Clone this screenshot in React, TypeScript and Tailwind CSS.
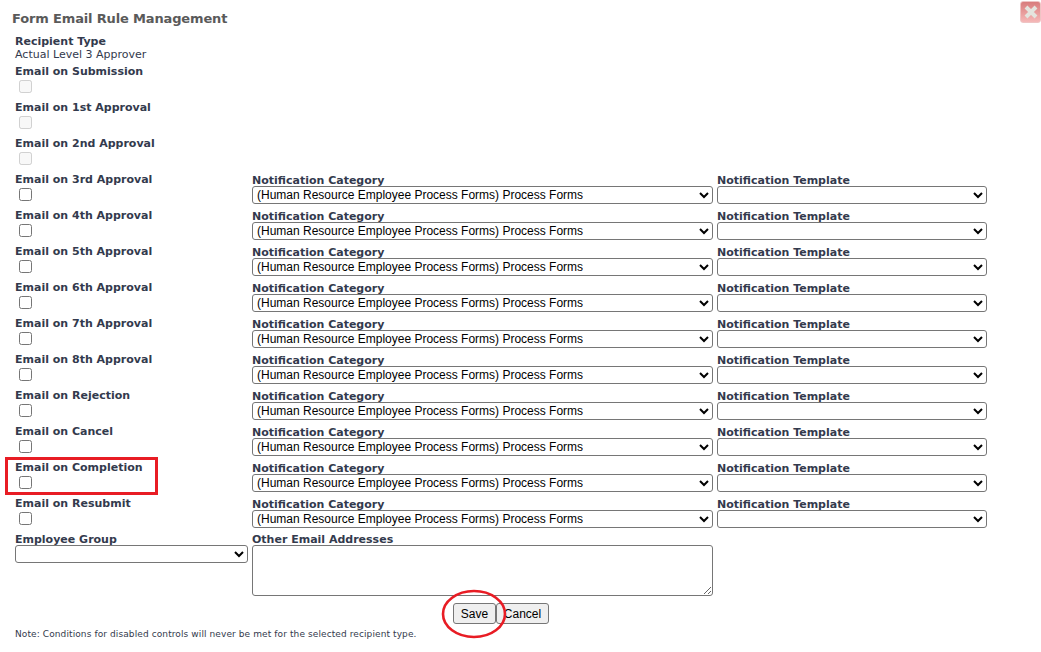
const categoryLabel = "(Human Resource Employee Process Forms) Process Forms";

const disabledRows = ["Email on Submission", "Email on 1st Approval", "Email on 2nd Approval"];
const activeRows = [
  "Email on 3rd Approval",
  "Email on 4th Approval",
  "Email on 5th Approval",
  "Email on 6th Approval",
  "Email on 7th Approval",
  "Email on 8th Approval",
  "Email on Rejection",
  "Email on Cancel",
  "Email on Completion",
  "Email on Resubmit",
];

const labelClass = "block h-[14px] text-[11px] leading-[14px] font-bold text-[#333a4d] whitespace-nowrap";
const selectClass =
  "block h-[18px] border border-[#767676] rounded-[3px] bg-white text-[12px] leading-[14px] text-black [font-family:'Liberation_Sans',Arial,sans-serif]";
const buttonClass =
  "h-[21px] rounded-[3px] border border-[#767676] bg-[#efefef] text-[12px] text-black [font-family:'Liberation_Sans',Arial,sans-serif]";

function CheckRow({ label, disabled }: { label: string; disabled?: boolean }) {
  return (
    <div className="h-[36px] w-[237px] shrink-0 pt-[1px]">
      <span className={labelClass}>{label}</span>
      <input type="checkbox" disabled={disabled} className="block ml-[4px] mt-[1px] w-[13px] h-[13px]" />
    </div>
  );
}

function NotificationRow({ label }: { label: string }) {
  return (
    <div className="flex h-[36px]">
      <CheckRow label={label} />
      <div className="w-[465px] shrink-0 pt-[2px]">
        <span className={labelClass}>Notification Category</span>
        <select className={`${selectClass} w-[461px] mt-[-2px]`} defaultValue={categoryLabel}>
          <option>{categoryLabel}</option>
        </select>
      </div>
      <div className="w-[270px] shrink-0 pt-[2px]">
        <span className={labelClass}>Notification Template</span>
        <select className={`${selectClass} w-[270px] mt-[-2px]`}>
          <option></option>
        </select>
      </div>
    </div>
  );
}

export default function App() {
  return (
    <div className="relative h-[652px] w-[1041px] overflow-hidden bg-white [font-family:'DejaVu_Sans',Verdana,sans-serif]">
      {/* close button */}
      <button className="absolute right-0 top-[1px] flex h-[22px] w-[21px] items-center justify-center rounded-[3px] border border-[#efc4c4] bg-gradient-to-b from-[#d87c7c] to-[#f5b8b8]">
        <svg width="16" height="16" viewBox="0 0 16 16">
          <path d="M3 3 L13 13 M13 3 L3 13" stroke="#e4e4de" strokeWidth="4" />
        </svg>
      </button>

      <div className="pl-[12px] pt-[11px]">
        <h1 className="text-[13px] leading-[16px] font-bold tracking-[-0.15px] text-[#5a5a5a]">
          Form Email Rule Management
        </h1>
      </div>

      <div className="pl-[15px] pt-[8px]">
        <span className={labelClass}>Recipient Type</span>
        <p className="h-[15px] text-[11px] leading-[12px] text-[#333a4d]">Actual Level 3 Approver</p>

        {disabledRows.map((label) => (
          <CheckRow key={label} label={label} disabled />
        ))}
        {activeRows.map((label) => (
          <NotificationRow key={label} label={label} />
        ))}

        <div className="flex pt-[1px]">
          <div className="w-[237px] shrink-0">
            <span className={labelClass}>Employee Group</span>
            <select className={`${selectClass} w-[233px] mt-[-2px]`}>
              <option></option>
            </select>
          </div>
          <div className="w-[461px] shrink-0">
            <span className={labelClass}>Other Email Addresses</span>
            <textarea className="block h-[51px] w-[461px] mt-[-2px] border border-[#767676] rounded-[3px] bg-white" />
          </div>
        </div>

        <div className="mt-[7px] flex w-[972px] justify-center">
          <button className={`${buttonClass} w-[43px]`}>Save</button>
          <button className={`${buttonClass} w-[53px]`}>Cancel</button>
        </div>

        <p className="mt-[4px] text-[9px] leading-[12px] tracking-[0.1px] text-[#333a4d]">
          Note: Conditions for disabled controls will never be met for the selected recipient type.
        </p>
      </div>

      {/* red annotations */}
      <div className="absolute left-[5px] top-[457px] h-[38px] w-[153px] border-[3px] border-[#e81c24]" />
      <svg className="absolute left-[440px] top-[588px]" width="68" height="52" viewBox="0 0 68 52">
        <ellipse cx="34" cy="26" rx="31" ry="23" fill="none" stroke="#e81c24" strokeWidth="2.6" />
      </svg>
    </div>
  );
}
